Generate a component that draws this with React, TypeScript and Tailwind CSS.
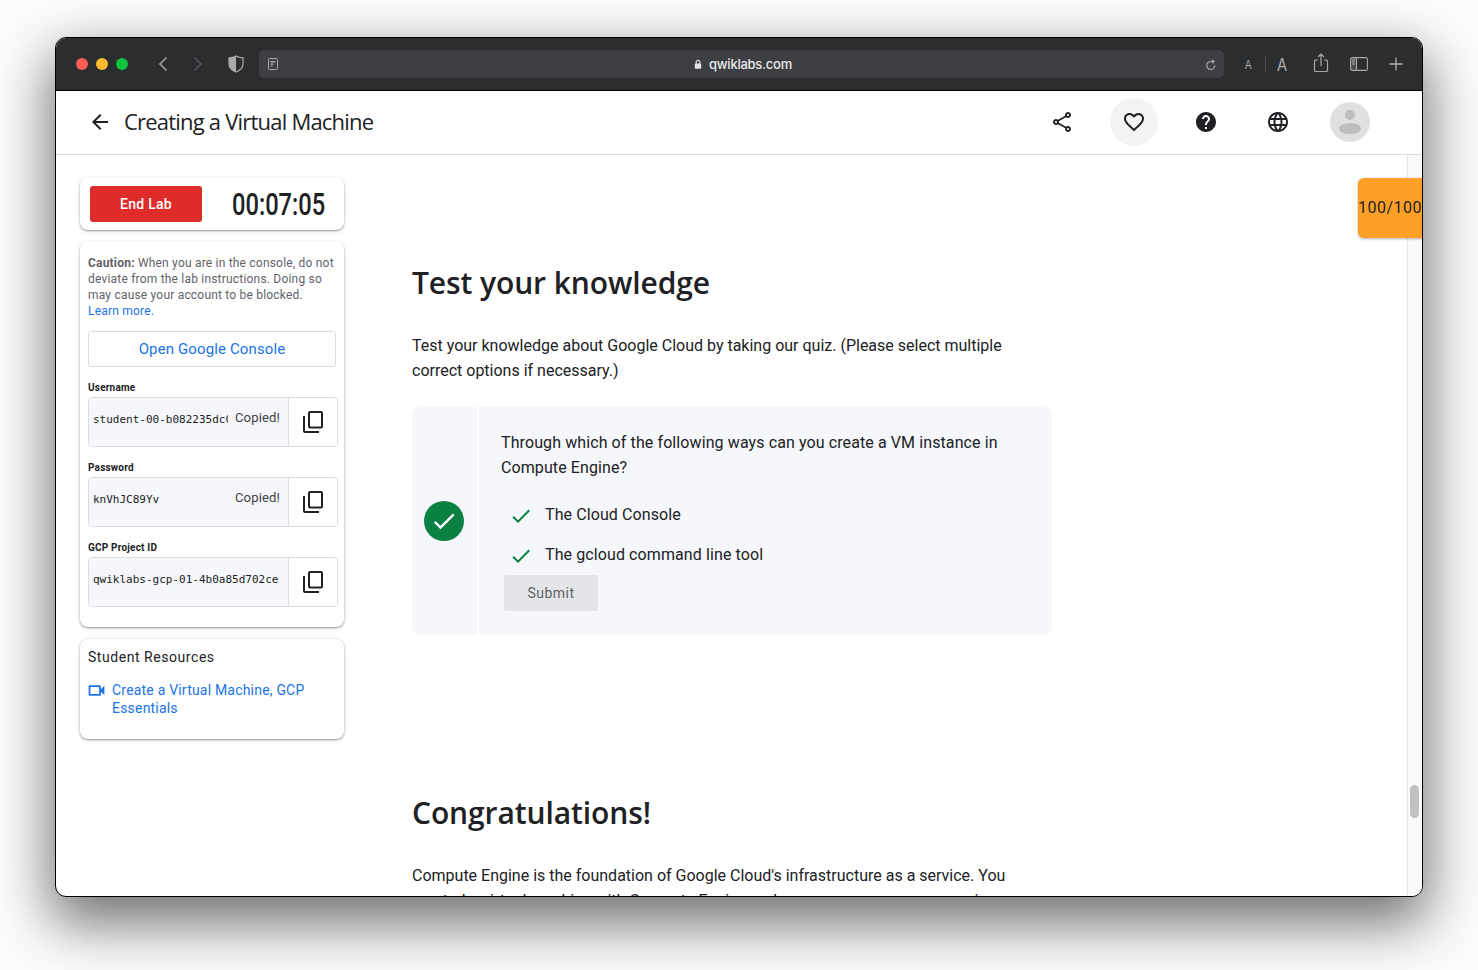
import React from "react";

const P = {
  share: "M18 16.08c-.76 0-1.44.3-1.96.77L8.91 12.7c.05-.23.09-.46.09-.7s-.04-.47-.09-.7l7.05-4.11c.54.5 1.25.81 2.04.81 1.66 0 3-1.34 3-3s-1.34-3-3-3-3 1.34-3 3c0 .24.04.47.09.7L8.04 9.81C7.5 9.31 6.79 9 6 9c-1.66 0-3 1.34-3 3s1.34 3 3 3c.79 0 1.5-.31 2.04-.81l7.12 4.16c-.05.21-.08.43-.08.65 0 1.61 1.31 2.92 2.92 2.92s2.92-1.31 2.92-2.92-1.31-2.92-2.92-2.92zM18 4c.55 0 1 .45 1 1s-.45 1-1 1-1-.45-1-1 .45-1 1-1zM6 13c-.55 0-1-.45-1-1s.45-1 1-1 1 .45 1 1-.45 1-1 1zm12 7.02c-.55 0-1-.45-1-1s.45-1 1-1 1 .45 1 1-.45 1-1 1z",
  heart: "M16.5 3c-1.74 0-3.41.81-4.5 2.09C10.91 3.81 9.24 3 7.5 3 4.42 3 2 5.42 2 8.5c0 3.78 3.4 6.86 8.55 11.54L12 21.35l1.45-1.32C18.6 15.36 22 12.28 22 8.5 22 5.42 19.58 3 16.5 3zm-4.4 15.55l-.1.1-.1-.1C7.14 14.24 4 11.39 4 8.5 4 6.5 5.5 5 7.5 5c1.54 0 3.04.99 3.57 2.36h1.87C13.46 5.99 14.96 5 16.5 5c2 0 3.5 1.5 3.5 3.5 0 2.89-3.14 5.74-7.9 10.05z",
  help: "M12 2C6.48 2 2 6.48 2 12s4.48 10 10 10 10-4.48 10-10S17.52 2 12 2zm1 17h-2v-2h2v2zm2.07-7.75l-.9.92C13.45 12.9 13 13.5 13 15h-2v-.5c0-1.1.45-2.1 1.17-2.83l1.24-1.26c.37-.36.59-.86.59-1.41 0-1.1-.9-2-2-2s-2 .9-2 2H8c0-2.21 1.79-4 4-4s4 1.79 4 4c0 .88-.36 1.68-.93 2.25z",
  globe: "M11.99 2C6.47 2 2 6.48 2 12s4.47 10 9.99 10C17.52 22 22 17.52 22 12S17.52 2 11.99 2zm6.93 6h-2.95c-.32-1.25-.78-2.45-1.38-3.56 1.84.63 3.37 1.91 4.33 3.56zM12 4.04c.83 1.2 1.48 2.53 1.91 3.96h-3.82c.43-1.43 1.08-2.76 1.91-3.96zM4.26 14C4.1 13.36 4 12.69 4 12s.1-1.36.26-2h3.38c-.08.66-.14 1.32-.14 2 0 .68.06 1.34.14 2H4.26zm.82 2h2.95c.32 1.25.78 2.45 1.38 3.56-1.84-.63-3.37-1.9-4.33-3.56zm2.95-8H5.08c.96-1.66 2.49-2.93 4.33-3.56C8.81 5.55 8.35 6.75 8.03 8zM12 19.96c-.83-1.2-1.48-2.53-1.91-3.96h3.82c-.43 1.43-1.08 2.76-1.91 3.96zM14.34 14H9.66c-.09-.66-.16-1.32-.16-2 0-.68.07-1.35.16-2h4.68c.09.65.16 1.32.16 2 0 .68-.07 1.34-.16 2zm.25 5.56c.6-1.11 1.06-2.31 1.38-3.56h2.95c-.96 1.65-2.49 2.93-4.33 3.56zM16.36 14c.08-.66.14-1.32.14-2 0-.68-.06-1.34-.14-2h3.38c.16.64.26 1.31.26 2s-.1 1.36-.26 2h-3.38z",
  video: "M15 8v8H5V8h10m1-2H4c-.55 0-1 .45-1 1v10c0 .55.45 1 1 1h12c.55 0 1-.45 1-1v-3.5l4 4v-11l-4 4V7c0-.55-.45-1-1-1z",
  check: "M9 16.17L4.83 12l-1.42 1.41L9 19 21 7l-1.41-1.41z",
  back: "M20 11H7.83l5.59-5.59L12 4l-8 8 8 8 1.41-1.41L7.83 13H20v-2z",
};

function MI({ d, className }: { d: string; className: string }) {
  return (
    <svg viewBox="0 0 24 24" fill="currentColor" className={className}>
      <path d={d} />
    </svg>
  );
}

function CopyIcon() {
  return (
    <svg viewBox="0 0 20 22" fill="none" stroke="currentColor" strokeWidth="2" className="h-[22px] w-[20px] text-[#202124]">
      <rect x="6" y="1" width="13" height="15.500" rx="1" />
      <path d="M1 5v15a1 1 0 0 0 1 1h14" />
    </svg>
  );
}

function Field({ label, value, copied }: { label: string; value: string; copied?: boolean }) {
  return (
    <div className="mt-[14px]">
      <div className="text-[10px] leading-[13px] font-bold text-[#202124] tracking-[0.2px]">{label}</div>
      <div className="mt-[3px] flex h-[50px] w-[250px] rounded-[4px] border border-[#dadce0] overflow-hidden">
        <div className="flex w-[200px] shrink-0 items-center bg-[#f5f7fa] border-r border-[#dadce0] pl-[4px] pb-[3px]">
          <div className={`${copied ? "w-[135px]" : "w-[192px]"} shrink-0 overflow-hidden whitespace-nowrap font-['DejaVu_Sans_Mono',monospace] text-[11px] text-[#202124]`}>
            {value}
          </div>
          {copied && <div className="ml-[7px] -mt-[6px] whitespace-nowrap text-[13px] tracking-[0.15px] text-[#3c4043]">Copied!</div>}
        </div>
        <div className="flex flex-1 items-center justify-center bg-white">
          <CopyIcon />
        </div>
      </div>
    </div>
  );
}

const cardCls = "w-[264px] rounded-[8px] bg-white shadow-[0_1px_2px_rgba(0,0,0,0.35),0_1px_5px_rgba(0,0,0,0.12)]";

function TitleBar() {
  return (
    <div className="flex h-[53px] shrink-0 items-center border-b border-black bg-[#2c2d2f] pl-[20px] pr-[19px]">
      <div className="flex gap-[8px]">
        <span className="h-[12px] w-[12px] rounded-full bg-[#ff5f57]" />
        <span className="h-[12px] w-[12px] rounded-full bg-[#febc2e]" />
        <span className="h-[12px] w-[12px] rounded-full bg-[#0ec43c]" />
      </div>
      <svg viewBox="0 0 12 16" className="ml-[29px] h-[16px] w-[12px]" fill="none" stroke="#a8a9ab" strokeWidth="1.5">
        <path d="M9.5 1.5 3 8l6.5 6.5" />
      </svg>
      <svg viewBox="0 0 12 16" className="ml-[23px] h-[16px] w-[12px]" fill="none" stroke="#55565a" strokeWidth="1.5">
        <path d="M2.5 1.5 9 8l-6.5 6.5" />
      </svg>
      <svg viewBox="0 0 16 18" className="ml-[24px] h-[18px] w-[16px]">
        <path d="M8 1c2 1.2 4.400 1.800 7 1.800V9c0 3.800-3 6.500-7 8-4-1.500-7-4.200-7-8V2.800C3.600 2.800 6 2.200 8 1z" fill="#2c2d2f" stroke="#a8a9ab" strokeWidth="1.200" />
        <path d="M8 1c-2 1.200-4.400 1.800-7 1.800V9c0 3.800 3 6.500 7 8z" fill="#a8a9ab" />
      </svg>
      <div className="ml-[15px] flex h-[28px] w-[965px] items-center rounded-[5px] bg-[#3e3f42] pl-[9px] pr-[7px]">
        <svg viewBox="0 0 10 12" className="h-[12px] w-[10px]">
          <rect x="0.500" y="0.500" width="9" height="11" rx="1" fill="#3e3f42" stroke="#a8a9ab" />
          <path d="M2.500 3h5v1.500h-5zM2.500 5.500h3v1.200h-3zM2.500 7.500h2v1h-2z" fill="#a8a9ab" />
        </svg>
        <div className="flex flex-1 items-center justify-center gap-[6px] pl-[2px]">
          <svg viewBox="0 0 10 12" className="h-[11px] w-[10px]">
            <path d="M3 5.500V3.500a2 2 0 0 1 4 0v2" fill="none" stroke="#e4e5e6" strokeWidth="1.200" />
            <rect x="1.500" y="5" width="7" height="5.500" rx="1" fill="#e4e5e6" />
          </svg>
          <span className="mt-px text-[13px] font-medium text-[#e9eaeb] font-['Inter',sans-serif] tracking-[-0.25px]">qwiklabs.com</span>
        </div>
        <svg viewBox="0 0 12 12" className="mt-px h-[12px] w-[12px]" fill="none" stroke="#a8a9ab" strokeWidth="1.200">
          <path d="M9.800 6.500A4 4 0 1 1 6 2.500h2.500M7.200 .8 9 2.500 7.200 4.200" />
        </svg>
      </div>
      <span className="ml-[20px] w-[8px] scale-x-75 text-center text-[13px] leading-none text-[#b0b1b3] font-['Liberation_Sans',sans-serif]">A</span>
      <span className="ml-[13px] h-[18px] w-px bg-[#48494c]" />
      <span className="ml-[10px] w-[10px] scale-x-75 text-center text-[19px] leading-none text-[#b0b1b3] font-['Liberation_Sans',sans-serif]">A</span>
      <svg viewBox="0 0 16 20" className="ml-[27px] h-[20px] w-[16px] -mt-[2px]" fill="none" stroke="#a8a9ab" strokeWidth="1.200">
        <path d="M5 7H2.500a1 1 0 0 0-1 1v9.500a1 1 0 0 0 1 1h11a1 1 0 0 0 1-1V8a1 1 0 0 0-1-1H11M8 13V1.500M5 4l3-3 3 3" />
      </svg>
      <svg viewBox="0 0 18 14" className="ml-[21px] h-[14px] w-[18px]" fill="none" stroke="#a8a9ab" strokeWidth="1.100">
        <rect x="0.600" y="0.600" width="16.800" height="12.800" rx="1.500" />
        <path d="M6.500 .6v12.800" />
        <path d="M2 3h3M2 5h3M2 7h3" />
        <rect x="1" y="1" width="5.500" height="12" fill="#a8a9ab" fillOpacity="0.250" stroke="none" />
      </svg>
      <svg viewBox="0 0 14 14" className="ml-[21px] h-[14px] w-[14px]" stroke="#b0b1b3" strokeWidth="1.300">
        <path d="M7 .5v13M.5 7h13" />
      </svg>
    </div>
  );
}

function Header() {
  return (
    <div className="flex h-[64px] shrink-0 items-center border-b border-[#dadce0] bg-white pl-[32px] pb-[2px]">
      <MI d={P.back} className="h-[24px] w-[24px] text-[#202124]" />
      <div className="ml-[12px] text-[22px] font-['Open_Sans',sans-serif] tracking-[-0.79px] text-[#202124]">
        Creating a Virtual Machine
      </div>
      <div className="ml-auto flex items-center pr-[48px] gap-[24px]">
        <div className="flex h-[48px] w-[48px] items-center justify-center">
          <MI d={P.share} className="h-[24px] w-[24px] text-[#202124]" />
        </div>
        <div className="flex h-[48px] w-[48px] items-center justify-center rounded-full bg-[#f3f3f3]">
          <MI d={P.heart} className="h-[24px] w-[24px] text-[#202124]" />
        </div>
        <div className="flex h-[48px] w-[48px] items-center justify-center">
          <MI d={P.help} className="h-[24px] w-[24px] text-[#202124]" />
        </div>
        <div className="flex h-[48px] w-[48px] items-center justify-center">
          <MI d={P.globe} className="h-[24px] w-[24px] text-[#202124]" />
        </div>
        <div className="flex h-[48px] w-[48px] items-center justify-center">
          <svg viewBox="0 0 40 40" className="h-[40px] w-[40px]">
            <circle cx="20" cy="20" r="20" fill="#e0e0e0" />
            <circle cx="20" cy="13" r="5" fill="#bdbdbd" />
            <ellipse cx="20" cy="26.500" rx="11" ry="5.500" fill="#bdbdbd" />
          </svg>
        </div>
      </div>
    </div>
  );
}

function Sidebar() {
  return (
    <div className="flex w-[332px] shrink-0 flex-col gap-[12px] pl-[24px] pt-[23px]">
      <div className={`${cardCls} flex h-[52px] items-center pl-[10px]`}>
        <div className="flex h-[36px] w-[112px] shrink-0 items-center justify-center rounded-[3px] bg-[#e02b2b] text-[14px] font-medium tracking-[0.25px] text-white">
          End Lab
        </div>
        <div className="ml-[30px] w-[93px] shrink-0 origin-left scale-x-[0.74] whitespace-nowrap font-['Roboto',sans-serif] text-[32px] font-medium leading-none text-[#202124]">
          00:07:05
        </div>
      </div>
      <div className={`${cardCls} h-[385px] px-[8px] pt-[13px]`}>
        <p className="w-[248px] text-[12px] leading-[16px] tracking-[0.2px] text-[#5f6368]">
          <b className="font-bold">Caution:</b> When you are in the console, do not deviate from the lab instructions. Doing so may cause your account to be blocked.
          <span className="block text-[#1a73e8]">Learn more.</span>
        </p>
        <div className="mt-[12px] mb-[13px] flex h-[36px] w-[248px] items-center justify-center rounded-[3px] border border-[#dadce0] text-[15px] tracking-[0.13px] text-[#1a73e8]">
          Open Google Console
        </div>
        <Field label="Username" value="student-00-b082235dc0c4" copied />
        <Field label="Password" value="knVhJC89Yv" copied />
        <Field label="GCP Project ID" value="qwiklabs-gcp-01-4b0a85d702ce" />
      </div>
      <div className={`${cardCls} h-[100px] px-[8px] pt-[9px]`}>
        <div className="text-[14px] leading-[18px] tracking-[0.55px] text-[#202124]">Student Resources</div>
        <div className="mt-[15px] flex text-[14px] leading-[18px] text-[#1a73e8]">
          <MI d={P.video} className="-ml-[2px] -mt-px h-[21px] w-[21px] shrink-0" />
          <span className="ml-[5px] tracking-[0.2px]">
            Create a Virtual Machine, GCP
            <br />
            Essentials
          </span>
        </div>
      </div>
    </div>
  );
}

function Option({ text }: { text: string }) {
  return (
    <div className="flex h-[40px] items-center">
      <MI d={P.check} className="h-[24px] w-[24px] text-[#0b8043] ml-[8px] mt-[1px]" />
      <span className="ml-[12px] text-[16px] text-[#202124] tracking-[0.1px]">{text}</span>
    </div>
  );
}

function Main() {
  const h2 = "font-['Open_Sans',sans-serif] text-[30px] font-semibold leading-[40px] tracking-[-0.1px] text-[#202124]";
  return (
    <div className="ml-[24px] w-[640px] shrink-0 font-['Roboto',sans-serif]">
      <h2 className={`${h2} mt-[108px]`}>Test your knowledge</h2>
      <p className="mt-[30px] w-[640px] text-[16px] leading-[25px] text-[#202124]">
        Test your knowledge about Google Cloud by taking our quiz. (Please select multiple correct options if necessary.)
      </p>
      <div className="mt-[24px] flex h-[228px] rounded-[8px] bg-[#f5f7fa]">
        <div className="flex w-[67px] shrink-0 items-center justify-center border-r-2 border-white pr-px">
          <div className="flex h-[40px] w-[40px] items-center justify-center rounded-full bg-[#0b8043]">
            <MI d={P.check} className="h-[28px] w-[28px] text-white" />
          </div>
        </div>
        <div className="pl-[22px] pt-[23px]">
          <p className="w-[530px] text-[16px] leading-[25px] tracking-[0.1px] text-[#202124]">
            Through which of the following ways can you create a VM instance in Compute Engine?
          </p>
          <div className="mt-[15px]">
            <Option text="The Cloud Console" />
            <Option text="The gcloud command line tool" />
          </div>
          <div className="ml-[3px] flex h-[36px] w-[94px] items-center justify-center rounded-[3px] bg-[#e3e5e8] text-[14px] tracking-[0.5px] text-[#5f6368]">
            Submit
          </div>
        </div>
      </div>
      <h2 className={`${h2} mt-[158px]`}>Congratulations!</h2>
      <p className="mt-[30px] w-[610px] text-[16px] leading-[25px] text-[#202124]">
        Compute Engine is the foundation of Google Cloud's infrastructure as a service. You created a virtual machine with Compute Engine and can now map your on-premises
      </p>
    </div>
  );
}

export default function App() {
  return (
    <div className="h-[970px] w-full overflow-hidden bg-[#fcfcfc] px-[55px] pt-[37px] font-['Roboto',sans-serif]">
      <div className="relative flex h-[860px] w-[1368px] flex-col overflow-hidden rounded-[11px] border border-black bg-white shadow-[0_22px_56px_4px_rgba(0,0,0,0.56)]">
        <TitleBar />
        <Header />
        <div className="relative flex min-h-0 flex-1 overflow-hidden">
          <Sidebar />
          <Main />
          <div className="ml-auto w-[15px] shrink-0 border-l border-[#e8e8e8] bg-[#fafafa] pl-[2px] pt-[630px]">
            <div className="h-[33px] w-[9px] rounded-full bg-[#c1c1c1]" />
          </div>
          <div className="absolute right-0 top-[23px] flex h-[60px] w-[64px] items-center justify-center overflow-hidden rounded-l-[6px] bg-[#ffa026] text-[16px] tracking-[0.5px] text-[#202124] shadow-[0_1px_3px_rgba(0,0,0,0.3)]">
            100/100
          </div>
        </div>
      </div>
    </div>
  );
}
